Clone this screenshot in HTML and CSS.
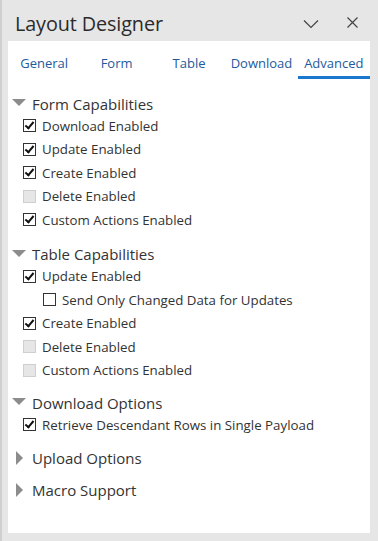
FILE: index.html
```html
<!DOCTYPE html>
<html>
<head>
<meta charset="utf-8">
<link rel="stylesheet" href="styles.css">
</head>
<body>
<div class="window">
  <div class="header">
    <div class="title">Layout Designer</div>
    <div class="controls">
      <svg class="ctl chev" width="16" height="10" viewBox="0 0 16 10"><polyline points="1,1.5 8,8.5 15,1.5" fill="none" stroke="#444" stroke-width="1.2"/></svg>
      <svg class="ctl close" width="11" height="11" viewBox="0 0 11 11"><path d="M0.5 0.5 L10.5 10.5 M10.5 0.5 L0.5 10.5" stroke="#444" stroke-width="1.2"/></svg>
    </div>
  </div>
  <div class="panel">
    <div class="tabs">
      <div class="tab">General</div>
      <div class="tab">Form</div>
      <div class="tab">Table</div>
      <div class="tab">Download</div>
      <div class="tab active">Advanced</div>
    </div>
    <div class="content">
      <div class="section first">
        <div class="sec-head"><span class="tri down"></span>Form Capabilities</div>
        <div class="row"><span class="cb on"></span>Download Enabled</div>
        <div class="row"><span class="cb on"></span>Update Enabled</div>
        <div class="row"><span class="cb on"></span>Create Enabled</div>
        <div class="row"><span class="cb dis"></span>Delete Enabled</div>
        <div class="row"><span class="cb on"></span>Custom Actions Enabled</div>
      </div>
      <div class="section">
        <div class="sec-head"><span class="tri down"></span>Table Capabilities</div>
        <div class="row"><span class="cb on"></span>Update Enabled</div>
        <div class="row sub"><span class="cb"></span>Send Only Changed Data for Updates</div>
        <div class="row"><span class="cb on"></span>Create Enabled</div>
        <div class="row"><span class="cb dis"></span>Delete Enabled</div>
        <div class="row"><span class="cb dis"></span>Custom Actions Enabled</div>
      </div>
      <div class="section download">
        <div class="sec-head"><span class="tri down"></span>Download Options</div>
        <div class="row"><span class="cb on"></span>Retrieve Descendant Rows in Single Payload</div>
      </div>
      <div class="section collapsed">
        <div class="sec-head"><span class="tri right"></span>Upload Options</div>
      </div>
      <div class="section collapsed">
        <div class="sec-head"><span class="tri right"></span>Macro Support</div>
      </div>
    </div>
  </div>
</div>
</body>
</html>
```
FILE: styles.css
```css
html, body {
  margin: 0;
  padding: 0;
  background: #e6e6e6;
}
body {
  font-family: "Open Sans", "Noto Sans", sans-serif;
  color: #333;
}
.window {
  width: 378px;
  height: 541px;
  box-sizing: border-box;
  border-left: 2px solid #cfcfcf;
  background: #e6e6e6;
  display: flex;
  flex-direction: column;
}
.header {
  height: 41px;
  display: flex;
  align-items: flex-start;
  justify-content: space-between;
}
.title {
  margin: 10px 0 0 13px;
  font-size: 19.8px;
  line-height: 27px;
  color: #2b2b2b;
  letter-spacing: -0.1px;
}
.controls {
  display: flex;
  align-items: flex-start;
  margin: 0 20px 0 0;
}
.chev {
  margin-top: 19px;
  margin-right: 28px;
}
.close {
  margin-top: 17px;
}
.panel {
  margin-left: 6px;
  width: 362px;
  height: 492px;
  background: #fff;
}
.tabs {
  display: flex;
  height: 38px;
}
.tab {
  flex: 1;
  text-align: center;
  font-size: 13px;
  line-height: 16px;
  padding-top: 14px;
  color: #245a9c;
  box-sizing: border-box;
  height: 38px;
  white-space: nowrap;
}
.tab.active {
  border-bottom: 3px solid #1a78cf;
}
.content {
  padding-top: 14px;
}
.section {
  margin-top: 12px;
}
.section.first {
  margin-top: 0;
}
.section.download {
  margin-top: 10px;
}
.section.collapsed {
  margin-top: 11px;
}
.sec-head {
  display: flex;
  align-items: center;
  height: 21px;
  font-size: 15px;
  color: #333;
  padding-left: 4px;
}
.tri {
  display: inline-block;
  width: 0;
  height: 0;
}
.tri.down {
  border-left: 7px solid transparent;
  border-right: 7px solid transparent;
  border-top: 7px solid #8c8c8c;
  margin-right: 6px;
  margin-top: -2px;
}
.tri.right {
  border-top: 7px solid transparent;
  border-bottom: 7px solid transparent;
  border-left: 7px solid #8c8c8c;
  margin-left: 4px;
  margin-right: 9px;
}
.row {
  display: flex;
  align-items: center;
  height: 23.5px;
  font-size: 13.3px;
  padding-left: 15px;
  color: #333;
  white-space: nowrap;
}
.row.sub {
  padding-left: 35px;
}
.cb {
  width: 13px;
  height: 13px;
  box-sizing: border-box;
  border: 1px solid #333;
  background: #fff;
  margin-right: 6px;
  flex: none;
  position: relative;
}
.cb.dis {
  border-color: #cfcfcf;
  background: #e6e6e6;
}
.cb.on::after {
  content: "";
  position: absolute;
  left: 3px;
  top: 0px;
  width: 3px;
  height: 7px;
  border-right: 2px solid #111;
  border-bottom: 2px solid #111;
  transform: rotate(40deg);
}
```
